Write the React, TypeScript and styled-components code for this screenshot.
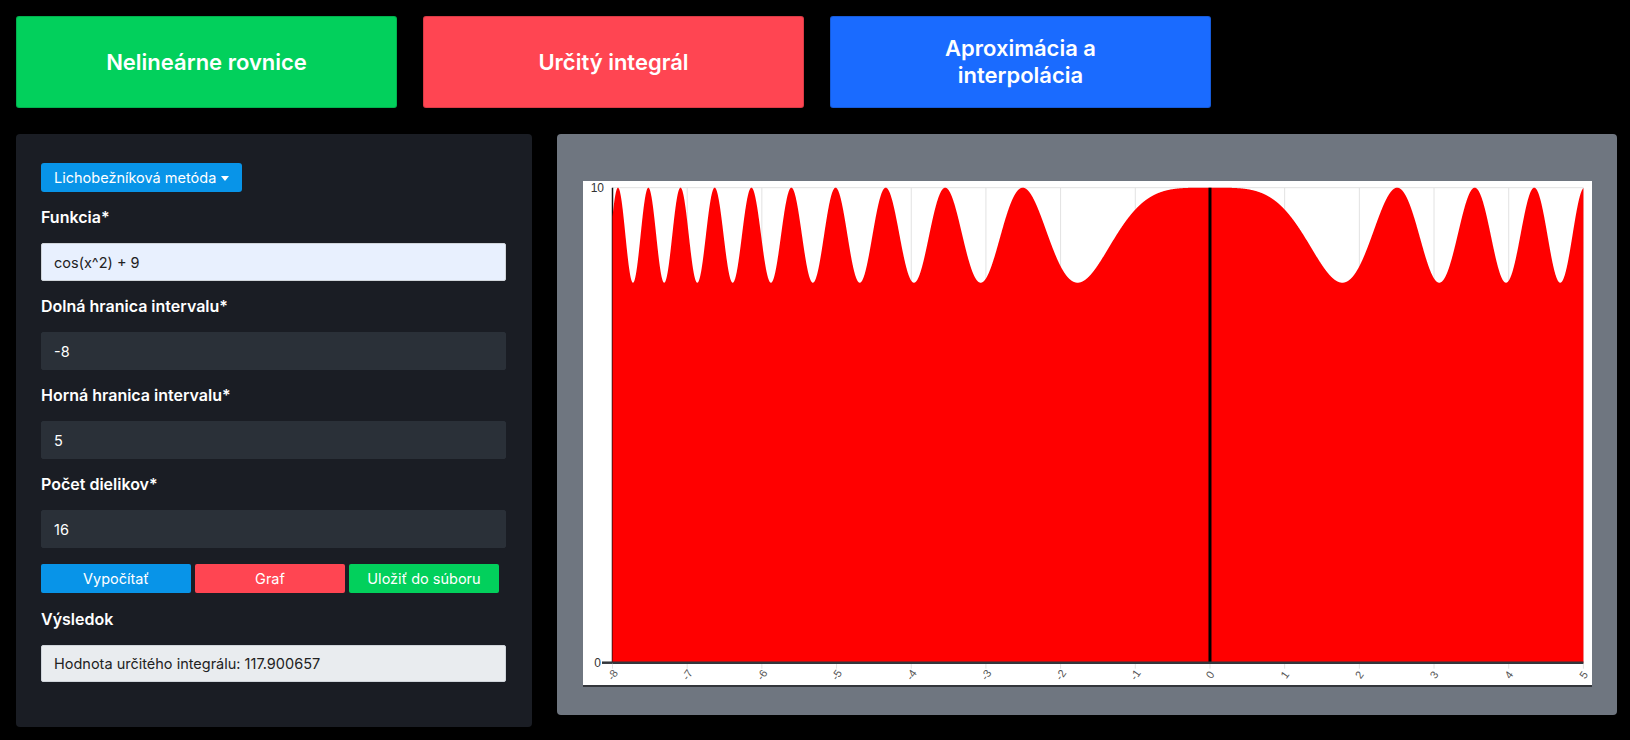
import React from "react";
import styled, { createGlobalStyle } from "styled-components";

const GlobalStyle = createGlobalStyle`
  html, body { margin: 0; padding: 0; background: #000; }
  body { font-family: "Inter", "Noto Sans", sans-serif; color: #fff; }
  * { box-sizing: border-box; }
`;

const Page = styled.div`
  width: 1630px;
  min-height: 740px;
  background: #000;
  padding: 16px 13px 0 16px;
`;

const TopBar = styled.div`
  display: flex;
  gap: 26px;
`;

const NavButton = styled.button<{ $bg: string }>`
  width: 381px;
  height: 92px;
  border: 1px solid rgba(0, 0, 0, 0.15);
  border-radius: 3px;
  background: ${(p) => p.$bg};
  color: #fff;
  font-family: "Inter", sans-serif;
  font-weight: 600;
  font-size: 22px;
  line-height: 27px;
  padding: 0 60px;
  cursor: pointer;
`;

const Main = styled.div`
  display: grid;
  grid-template-columns: 516px 1fr;
  gap: 25px;
  margin-top: 26px;
  align-items: start;
`;

const LeftPanel = styled.div`
  background: #1a1d24;
  border-radius: 4px;
  padding: 29px 26px 45px 25px;
  display: flex;
  flex-direction: column;
  align-items: flex-start;
`;

const Dropdown = styled.button`
  height: 29px;
  padding: 0 13px;
  border: none;
  border-radius: 3px;
  background: #0894e8;
  color: #fff;
  font-family: "Inter", sans-serif;
  font-size: 14.5px;
  display: flex;
  align-items: center;
  gap: 5px;
  margin-bottom: 13px;
  &::after {
    content: "";
    border-left: 4px solid transparent;
    border-right: 4px solid transparent;
    border-top: 5px solid #fff;
    margin-top: 1px;
  }
`;

const Field = styled.div<{ $mb?: number }>`
  width: 100%;
  margin-bottom: ${(p) => p.$mb ?? 13}px;
`;

const Label = styled.div`
  font-weight: 600;
  font-size: 16px;
  line-height: 24px;
  margin-bottom: 14px;
  color: #fff;
`;

const Input = styled.div<{ $variant: "light" | "dark" | "readonly" }>`
  width: 100%;
  height: ${(p) => (p.$variant === "readonly" ? 37 : 38)}px;
  display: flex;
  align-items: center;
  padding: 0 12px;
  font-size: 14.5px;
  border-radius: 2px;
  background: ${(p) =>
    p.$variant === "light" ? "#e8f0fe" : p.$variant === "readonly" ? "#e9ecef" : "#2a3038"};
  color: ${(p) => (p.$variant === "dark" ? "#fff" : "#222")};
  border: 1px solid ${(p) => (p.$variant === "dark" ? "#2a3038" : "#cfd4da")};
`;

const ActionRow = styled.div`
  display: flex;
  gap: 4px;
  margin: 16px 0 14px;
`;

const ActionButton = styled.button<{ $bg: string }>`
  width: 150px;
  height: 29px;
  border: none;
  border-radius: 2px;
  background: ${(p) => p.$bg};
  color: #fff;
  font-family: "Inter", sans-serif;
  font-size: 14.5px;
  padding: 0;
`;

const ChartPanel = styled.div`
  background: #6f7680;
  border-radius: 4px;
  padding: 47px 25px 28px 26px;
`;

const ChartBox = styled.div`
  background: #fff;
  height: 506px;
  border-bottom: 2px solid #33363b;
`;

const X0 = 29.5;
const X5 = 1000.4;
const Y10 = 6.7;
const Y0 = 481.7;
const xs = (x: number) => X0 + ((x + 8) / 13) * (X5 - X0);
const ys = (y: number) => Y0 - (y / 10) * (Y0 - Y10);

function buildArea() {
  const pts: string[] = [];
  pts.push(`M${xs(-8).toFixed(2)},${Y0}`);
  const n = 6500;
  for (let i = 0; i <= n; i++) {
    const x = -8 + (13 * i) / n;
    const y = Math.cos(x * x) + 9;
    pts.push(`L${xs(x).toFixed(2)},${ys(y).toFixed(2)}`);
  }
  pts.push(`L${xs(5).toFixed(2)},${Y0}Z`);
  return pts.join("");
}

const ticks = Array.from({ length: 14 }, (_, i) => i - 8);

function Chart() {
  const area = React.useMemo(buildArea, []);
  return (
    <svg width="1009" height="504" viewBox="0 0 1009 504">
      {ticks.map((t) => (
        <line key={t} x1={xs(t)} x2={xs(t)} y1={Y10} y2={Y0 + 6} stroke="#e2e2e2" strokeWidth={1} />
      ))}
      <line x1={X0} x2={X5} y1={Y10} y2={Y10} stroke="#e2e2e2" strokeWidth={1} />
      <line x1={X0} x2={X0} y1={Y10} y2={Y0} stroke="#111" strokeWidth={1.5} />
      <path d={area} fill="#ff0000" />
      <line x1={xs(0)} x2={xs(0)} y1={Y10} y2={Y0} stroke="#000" strokeWidth={3} />
      <line x1={X0} x2={X5} y1={Y0} y2={Y0} stroke="#33363b" strokeWidth={2.5} />
      <line x1={19} x2={X0} y1={Y0} y2={Y0} stroke="#33363b" strokeWidth={2.5} />
      <text x={21} y={Y10 + 4} fontSize={12} fill="#333" textAnchor="end" fontFamily="Liberation Sans, sans-serif">
        10
      </text>
      <text x={18} y={Y0 + 4} fontSize={12} fill="#333" textAnchor="end" fontFamily="Liberation Sans, sans-serif">
        0
      </text>
      {ticks.map((t) => (
        <text
          key={t}
          x={xs(t)}
          y={Y0 + 16}
          fontSize={11}
          fill="#555"
          textAnchor="middle"
          fontFamily="Liberation Sans, sans-serif"
          transform={`rotate(-55 ${xs(t)} ${Y0 + 12})`}
        >
          {t}
        </text>
      ))}
    </svg>
  );
}

export default function App() {
  return (
    <>
      <GlobalStyle />
      <Page>
        <TopBar>
          <NavButton $bg="#02d05c">Nelineárne rovnice</NavButton>
          <NavButton $bg="#ff4552">Určitý integrál</NavButton>
          <NavButton $bg="#1a6bff">Aproximácia a interpolácia</NavButton>
        </TopBar>
        <Main>
          <LeftPanel>
            <Dropdown>Lichobežníková metóda</Dropdown>
            <Field>
              <Label>Funkcia*</Label>
              <Input $variant="light">cos(x^2) + 9</Input>
            </Field>
            <Field>
              <Label>Dolná hranica intervalu*</Label>
              <Input $variant="dark">-8</Input>
            </Field>
            <Field>
              <Label>Horná hranica intervalu*</Label>
              <Input $variant="dark">5</Input>
            </Field>
            <Field $mb={0}>
              <Label>Počet dielikov*</Label>
              <Input $variant="dark">16</Input>
            </Field>
            <ActionRow>
              <ActionButton $bg="#0894e8">Vypočítať</ActionButton>
              <ActionButton $bg="#ff4552">Graf</ActionButton>
              <ActionButton $bg="#02d05c">Uložiť do súboru</ActionButton>
            </ActionRow>
            <Field $mb={0}>
              <Label>Výsledok</Label>
              <Input $variant="readonly">Hodnota určitého integrálu: 117.900657</Input>
            </Field>
          </LeftPanel>
          <ChartPanel>
            <ChartBox>
              <Chart />
            </ChartBox>
          </ChartPanel>
        </Main>
      </Page>
    </>
  );
}
